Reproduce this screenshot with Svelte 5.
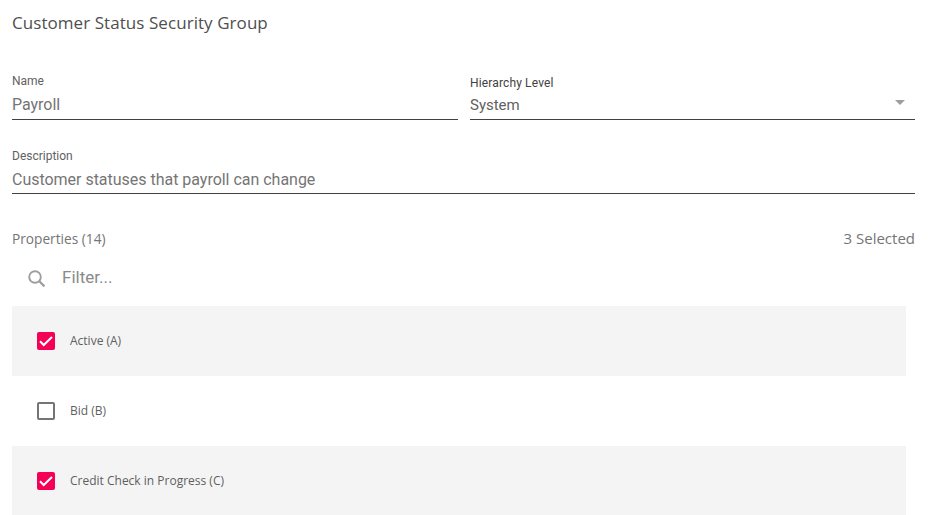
<script>
  const rows = [
    { label: 'Active (A)', checked: true },
    { label: 'Bid (B)', checked: false },
    { label: 'Credit Check in Progress (C)', checked: true }
  ];
</script>

<div class="page">
  <h1 class="title">Customer Status Security Group</h1>

  <div class="fields">
    <div class="field">
      <span class="label">Name</span>
      <div class="value">Payroll</div>
    </div>
    <div class="field">
      <span class="label dark">Hierarchy Level</span>
      <div class="value select">
        <span>System</span>
        <svg class="caret" width="10" height="5" viewBox="0 0 10 5"><path d="M0 0h10L5 5z" fill="#9e9e9e" /></svg>
      </div>
    </div>
    <div class="field wide">
      <span class="label">Description</span>
      <div class="value">Customer statuses that payroll can change</div>
    </div>
  </div>

  <div class="props-head">
    <span class="count">Properties (14)</span>
    <span class="selected">3 Selected</span>
  </div>

  <div class="filter">
    <svg class="search" width="20" height="20" viewBox="0 0 20 20" fill="none" stroke="#9e9e9e">
      <circle cx="8" cy="8" r="5.8" stroke-width="1.9" />
      <path d="M12.3 12.3L17.4 17.4" stroke-width="2.2" />
    </svg>
    <span class="placeholder">Filter...</span>
  </div>

  <div class="rows">
    {#each rows as row, i}
      <div class="row" class:shaded={i % 2 === 0}>
        {#if row.checked}
          <svg class="box" width="18" height="18" viewBox="0 0 18 18">
            <rect width="18" height="18" rx="2" fill="#f50057" />
            <path d="M3 9.3l3.7 3.7L15 5" fill="none" stroke="#fff" stroke-width="2" />
          </svg>
        {:else}
          <svg class="box" width="18" height="18" viewBox="0 0 18 18">
            <rect x="1" y="1" width="16" height="16" rx="1" fill="none" stroke="#757575" stroke-width="2" />
          </svg>
        {/if}
        <span class="row-label">{row.label}</span>
      </div>
    {/each}
  </div>
</div>

<style>
  :global(body) {
    margin: 0;
    background: #fff;
    overflow: hidden;
  }
  .page {
    box-sizing: border-box;
    width: 932px;
    height: 515px;
    padding: 12px 17px 0 12px;
    overflow: hidden;
    font-family: Roboto, sans-serif;
  }
  .title {
    margin: 0;
    font: 400 17px/22px "Open Sans", sans-serif;
    letter-spacing: 0.06px;
    color: #4f4f4f;
  }
  .fields {
    display: grid;
    grid-template-columns: 446px 445px;
    column-gap: 12px;
    row-gap: 28px;
    margin-top: 39px;
  }
  .wide {
    grid-column: 1 / -1;
  }
  .field {
    display: flex;
    flex-direction: column;
    height: 47px;
    box-sizing: border-box;
    border-bottom: 1px solid #424242;
  }
  .wide.field {
    height: 46px;
  }
  .label {
    font-size: 12px;
    line-height: 16px;
    color: #616161;
  }
  .label.dark {
    color: #424242;
    padding-top: 2px;
    letter-spacing: 0.14px;
  }
  .value {
    font-size: 16px;
    line-height: 20px;
    margin-top: 6px;
    letter-spacing: -0.02px;
    color: #757575;
  }
  .select {
    display: flex;
    justify-content: space-between;
    align-items: center;
    margin-top: 4px;
    font-size: 15px;
    color: #616161;
  }
  .caret {
    margin-right: 10px;
    margin-top: -5px;
  }
  .props-head {
    display: flex;
    justify-content: space-between;
    align-items: baseline;
    margin-top: 34px;
    font-family: "Open Sans", sans-serif;
    line-height: 20px;
    color: #757575;
  }
  .count {
    font-size: 13.7px;
  }
  .selected {
    font-size: 15px;
  }
  .filter {
    display: flex;
    align-items: center;
    height: 28px;
    margin-top: 14px;
    padding-left: 15px;
  }
  .search {
    margin-top: 4px;
  }
  .placeholder {
    margin-left: 15px;
    font-size: 17px;
    line-height: 24px;
    color: #8a8a8a;
  }
  .rows {
    width: 894px;
    margin-top: 15px;
  }
  .row {
    display: flex;
    align-items: center;
    height: 70px;
    padding-left: 25px;
    font: 400 12px/16px "Open Sans", sans-serif;
    color: #5f5f5f;
  }
  .shaded {
    background: #f4f4f4;
  }
  .row-label {
    margin-left: 15px;
  }
</style>
